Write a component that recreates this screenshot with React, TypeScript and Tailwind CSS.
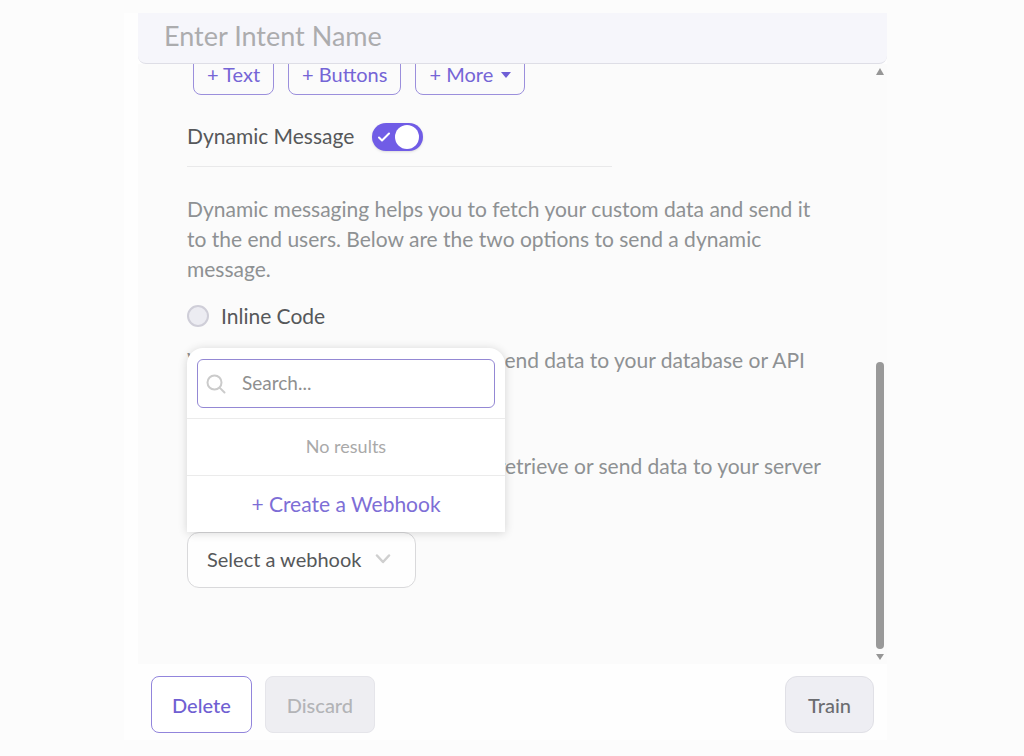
import { useState } from "react";
import type { ReactNode } from "react";

function OutlineButton({ children }: { children: ReactNode }) {
  return (
    <button
      type="button"
      className="flex h-10 items-center rounded-lg border border-[#9b8fdc] px-[13px] pb-[2px] text-xl leading-5 text-[#7565d6]"
    >
      {children}
    </button>
  );
}

function RadioRow({ label, value, selected, onSelect }: { label: string; value: string; selected: string; onSelect: (v: string) => void }) {
  return (
    <label className="flex h-[30px] items-center gap-3 text-[21px] text-[#56585a]">
      <input
        type="radio"
        name="source"
        value={value}
        checked={selected === value}
        onChange={() => onSelect(value)}
        className="size-[22px] appearance-none rounded-full border-2 border-[#cfced8] bg-[#ececf2] checked:border-[#705ce6]"
      />
      {label}
    </label>
  );
}

function WebhookMenu() {
  return (
    <div className="absolute bottom-full left-0 z-10 w-[318px] rounded-t-2xl bg-white shadow-[0_1px_10px_rgba(0,0,0,0.16)]">
      <div className="px-[10px] pt-[11px] pb-[10px]">
        <label className="flex h-[49px] items-center gap-4 rounded-md border border-[#9488d4] px-2">
          <svg viewBox="0 0 20 20" className="size-5 shrink-0" fill="none" stroke="#cbcbcb" strokeWidth="2" aria-hidden="true">
            <circle cx="8.5" cy="8.5" r="7" />
            <path d="M13.6 13.6 18.5 18.5" strokeLinecap="round" />
          </svg>
          <input
            type="text"
            aria-label="Search webhooks"
            placeholder="Search..."
            className="w-full min-w-0 bg-transparent text-[19px] outline-none placeholder:text-[#8f8f8f]"
          />
        </label>
      </div>
      <p className="border-t border-[#ebebeb] pt-[13px] pb-[15px] text-center text-lg text-[#a9a9a9]">No results</p>
      <button type="button" className="h-[57px] w-full border-t border-[#ebebeb] text-center text-[21px] text-[#7d6ed6]">
        + Create a Webhook
      </button>
    </div>
  );
}

function ScrollTrack() {
  return (
    <div className="flex w-2 shrink-0 flex-col items-center justify-between py-1" aria-hidden="true">
      <svg viewBox="0 0 8 7" className="h-[7px] w-2" fill="#969696">
        <path d="M4 0 8 7H0Z" />
      </svg>
      <div className="flex w-2 flex-1 items-end pb-[5px]">
        <div className="h-[50%] w-2 rounded-full bg-[#999]" />
      </div>
      <svg viewBox="0 0 8 6" className="h-[6px] w-2" fill="#969696">
        <path d="M0 0H8L4 6Z" />
      </svg>
    </div>
  );
}

export default function App() {
  const [dynamic, setDynamic] = useState(true);
  const [source, setSource] = useState("webhook");

  return (
    <div className="min-h-screen bg-[#fcfcfc] pr-[137px] pl-[124px] font-['Lato',sans-serif]">
      <main className="bg-[#fefefe] pb-[7px]">
        <div className="bg-[#fcfcfc] pt-[13px]" />
        <div className="pl-[14px]">
          <header className="rounded-b-lg border-b border-[#dedee6] bg-[#f6f6fb]">
            <input
              type="text"
              aria-label="Intent name"
              placeholder="Enter Intent Name"
              className="block h-[50px] w-full bg-transparent px-[26px] pb-[6px] text-[27px] text-[#4c4e50] outline-none placeholder:text-[#acacae]"
            />
          </header>

          <div className="flex overflow-hidden bg-[#fbfbfb] pr-[3px]">
            <div className="-mt-[9px] min-w-0 flex-1 pr-12 pb-[76px] pl-[49px]">
              <div className="flex gap-[14px] pl-[6px]">
                <OutlineButton>+ Text</OutlineButton>
                <OutlineButton>+ Buttons</OutlineButton>
                <OutlineButton>
                  + More
                  <svg viewBox="0 0 10 6" className="mt-[2px] ml-2 h-[6px] w-[10px]" fill="#6f5fd6" aria-hidden="true">
                    <path d="M0 0H10L5 6Z" />
                  </svg>
                </OutlineButton>
              </div>

              <div className="mt-[27px] flex h-[30px] items-center gap-[18px] text-[21px] text-[#56585a]">
                <label htmlFor="dynamic-message" className="pb-[2px]">Dynamic Message</label>
                <button
                  id="dynamic-message"
                  type="button"
                  role="switch"
                  aria-checked={dynamic}
                  onClick={() => setDynamic(!dynamic)}
                  className="flex h-7 w-[51px] items-center justify-between rounded-full bg-[#705ce6] pr-1 pl-[6px] shadow-sm"
                >
                  <svg viewBox="0 0 12 10" className="h-[10px] w-3" fill="none" stroke="#fff" strokeWidth="2" strokeLinecap="round" strokeLinejoin="round" aria-hidden="true">
                    <path d="M1 5.5 4 8.5 11 1.5" />
                  </svg>
                  <span className="size-6 rounded-full bg-white" />
                </button>
              </div>
              <hr className="mt-[14px] max-w-[425px] border-[#e9e9ea]" />

              <p className="mt-[27px] text-[21px] leading-[30px] text-[#8e9193]">
                Dynamic messaging helps you to fetch your custom data and send it to the end users. Below are the two options to send a dynamic message.
              </p>

              <div className="mt-[17px]">
                <RadioRow label="Inline Code" value="inline" selected={source} onSelect={setSource} />
              </div>
              <p className="mt-[14px] flex max-w-[618px] justify-between text-[21px] leading-[30px] text-[#8e9193]">
                <span>Write code to</span>
                <span>send data to your database or API</span>
              </p>
              <div className="mt-[33px]">
                <RadioRow label="Webhook" value="webhook" selected={source} onSelect={setSource} />
              </div>
              <p className="mt-[13px] flex max-w-[634px] justify-between text-[21px] leading-[30px] text-[#8e9193]">
                <span>Use a webhook</span>
                <span>retrieve or send data to your server</span>
              </p>

              <div className="relative mt-[51px] w-fit">
                <WebhookMenu />
                <button
                  type="button"
                  aria-expanded="true"
                  className="flex h-14 items-center gap-[14px] rounded-xl border border-[#d9d9db] bg-[#fefefe] pr-6 pb-[2px] pl-[19px] text-xl text-[#56585a]"
                >
                  Select a webhook
                  <svg viewBox="0 0 16 10" className="h-[10px] w-4" fill="none" stroke="#cfcfcf" strokeWidth="2.5" strokeLinecap="round" strokeLinejoin="round" aria-hidden="true">
                    <path d="M2 1.5 8 8 14 1.5" />
                  </svg>
                </button>
              </div>
            </div>
            <ScrollTrack />
          </div>

          <footer className="flex gap-[13px] pt-3 pr-[13px] pl-[13px]">
            <button type="button" className="h-[57px] rounded-lg border border-[#9285dc] bg-white px-5 text-xl font-medium text-[#705fd2]">
              Delete
            </button>
            <button type="button" disabled className="h-[57px] rounded-lg border border-[#e5e5ea] bg-[#eeeef2] px-[21px] text-xl font-medium text-[#b3b4b7]">
              Discard
            </button>
            <button type="button" className="ml-auto h-[57px] rounded-xl border border-[#e0e0e6] bg-[#eeeef3] px-[22px] text-xl font-medium text-[#6b6c70]">
              Train
            </button>
          </footer>
        </div>
      </main>
    </div>
  );
}
